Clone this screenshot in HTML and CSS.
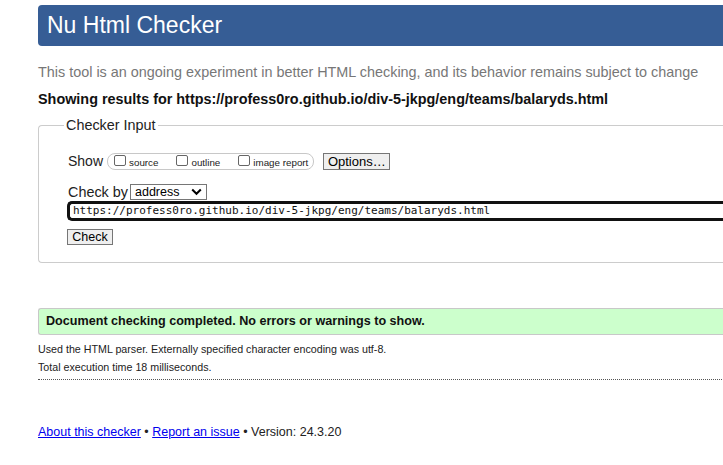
FILE: index.html
```html
<!DOCTYPE html>
<html>
<head>
<meta charset="utf-8">
<link rel="stylesheet" href="styles.css">
</head>
<body>
<div class="page">
  <h1 class="title">Nu Html Checker</h1>
  <p class="intro">This tool is an ongoing experiment in better HTML checking, and its behavior remains subject to change</p>
  <p class="showing">Showing results for https://profess0ro.github.io/div-5-jkpg/eng/teams/balaryds.html</p>
  <fieldset class="input-set">
    <legend>Checker Input</legend>
    <div class="show-row">
      <span class="lbl">Show</span>
      <span class="opts">
        <label><span class="cb"></span><span class="opt-text">source</span></label>
        <label><span class="cb"></span><span class="opt-text">outline</span></label>
        <label><span class="cb"></span><span class="opt-text">image report</span></label>
      </span>
      <span class="btn options">Options…</span>
    </div>
    <div class="by-row">
      <span class="lbl by">Check by</span>
      <span class="select"><span>address</span><svg width="11" height="8" viewBox="0 0 11 8"><path d="M1.2 1.5 L5.5 5.8 L9.8 1.5" fill="none" stroke="#000" stroke-width="2"/></svg></span>
    </div>
    <div class="url">https://profess0ro.github.io/div-5-jkpg/eng/teams/balaryds.html</div>
    <div class="btn check">Check</div>
  </fieldset>
  <p class="success">Document checking completed. No errors or warnings to show.</p>
  <p class="details">Used the HTML parser. Externally specified character encoding was utf-8.</p>
  <p class="details">Total execution time 18 milliseconds.</p>
  <hr class="dots">
  <p class="footer"><a href="#">About this checker</a> • <a href="#">Report an issue</a> • Version: 24.3.20</p>
</div>
</body>
</html>
```
FILE: styles.css
```css
html, body { margin: 0; padding: 0; background: #fff; overflow: hidden; }
body { font-family: "Liberation Sans", Arial, sans-serif; color: #000; }
.page { width: 760px; padding: 5px 0 0 38px; }
.title {
  margin: 0; height: 41px; box-sizing: border-box;
  background: #365d95; color: #fff; font-weight: normal;
  font-size: 23px; line-height: 41px; padding-left: 9px;
  border-radius: 4px 0 0 4px;
}
.intro { margin: 17px 0 0; font-size: 14.4px; color: #777; line-height: 18px; }
.showing { margin: 9px 0 0; font-size: 14.4px; font-weight: bold; color: #111; line-height: 18px; }
.input-set {
  margin: 9px 0 0; padding: 19px 0 17px 29px; min-width: 0;
  border: 1px solid #ccc; border-right: none; border-radius: 4px 0 0 4px;
}
.input-set legend {
  font-size: 14.4px; line-height: 16px; padding: 0 2px; margin-left: -4px; color: #222;
}
.show-row { display: flex; align-items: center; height: 18px; }
.lbl { font-size: 14px; color: #222; line-height: 18px; }
.lbl.by { font-size: 14.4px; }
.opts {
  display: flex; align-items: flex-start; margin-left: 4px; box-sizing: border-box;
  border: 1px solid #c8c8c8; border-radius: 8px; height: 17px; padding: 0 5px 0 6px;
}
.opts label { display: flex; align-items: flex-start; margin-right: 18px; height: 15px; }
.opts label:last-child { margin-right: 0; }
.cb {
  width: 12px; height: 11px; box-sizing: border-box; margin-top: 1px;
  border: 1px solid #666; border-radius: 2px; margin-right: 3px; background: #fff;
}
.opt-text { font-size: 9.8px; line-height: 11px; margin-top: 3px; color: #222; }
.btn {
  box-sizing: border-box; background: #efefef; border: 1px solid #767676; color: #000;
  text-align: center;
}
.options { margin-left: 9px; width: 67px; height: 17px; font-size: 13px; line-height: 15px; }
.by-row { display: flex; align-items: center; margin-top: 14px; height: 16px; }
.select {
  display: flex; align-items: center; justify-content: space-between;
  margin-left: 2px; width: 77px; height: 16px; box-sizing: border-box;
  border: 1px solid #767676; font-size: 12.5px; padding: 0 4px 0 4px; line-height: 14px;
}
.url {
  margin-top: 1px; margin-left: -1px; height: 20px; box-sizing: border-box;
  border: 3px solid #111; border-right: none; border-radius: 5px 0 0 5px;
  font-family: "DejaVu Sans Mono", monospace; font-size: 11px; line-height: 14px; padding-left: 3px;
  color: #111;
}
.check { margin-left: -1px; margin-top: 8px; width: 46px; height: 16px; font-size: 12.5px; line-height: 14px; }
.success {
  margin: 45px 0 0; height: 27px; box-sizing: border-box; background: #ccffcc;
  border: 1px solid #c8c8c8; border-right: none; border-radius: 3px 0 0 3px;
  font-size: 12.6px; font-weight: bold; line-height: 25px; padding-left: 7px; color: #111;
}
.details { margin: 0; font-size: 10.7px; line-height: 18px; color: #222; }
.success + .details { margin-top: 5px; }
.dots { margin: 3px 0 0; border: none; border-top: 1px dotted #555; height: 0; }
.footer { margin: 44px 0 0; font-size: 12.5px; line-height: 16px; color: #222; }
.footer a { color: #00e; text-decoration: underline; }
```
